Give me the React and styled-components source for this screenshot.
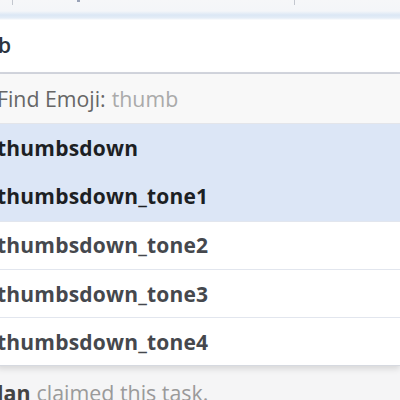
import React from "react";
import styled, { createGlobalStyle } from "styled-components";

const Global = createGlobalStyle`
  html, body { margin: 0; padding: 0; background: #f4f4f5; overflow: hidden; }
  body { font-family: "Open Sans", "Liberation Sans", sans-serif; }
`;

const Page = styled.div`
  width: 400px;
  height: 400px;
  overflow: hidden;
  display: flex;
  flex-direction: column;
  background: linear-gradient(#e9e9ea, #f5f5f6 30px);
`;

const Toolbar = styled.div`
  height: 20px;
  flex: none;
  display: flex;
  align-items: flex-start;
  background: linear-gradient(#f6f7f9 0px, #f4f6f9 11px, #dbe7f5 15px, #e4edf7 18px, #fdfdfe 20px);
`;

const Sep = styled.span`
  width: 1px;
  height: 5px;
  background: #c3c7cf;
  margin-left: ${(p) => p.$left}px;
`;

const Dot = styled.span`
  width: 3px;
  height: 2px;
  margin-left: 64px;
  background: #9aa3b8;
`;

const Input = styled.div`
  height: 54px;
  flex: none;
  display: flex;
  align-items: center;
  background: #ffffff;
  border-bottom: 2px solid #d3d6de;
  box-sizing: border-box;
  font-size: 21px;
  font-weight: 600;
  color: #2c3440;
  margin-left: -2px;
  padding-bottom: 3px;
`;

const Menu = styled.div`
  flex: none;
  background: #fff;
  margin-left: -3px;
  box-shadow: 0 3px 6px rgba(0, 0, 0, 0.12);
  border-bottom: 1px solid #d6d9e0;
`;

const Header = styled.div`
  height: 50px;
  display: flex;
  align-items: center;
  background: #f8f8f8;
  border-bottom: 1px solid #e3e5ea;
  font-size: 21.3px;
  color: #666666;
  box-sizing: border-box;
`;

const Query = styled.span`
  color: #aaaaaa;
  margin-left: 6px;
`;

const Row = styled.div`
  height: 48.3px;
  display: flex;
  align-items: center;
  box-sizing: border-box;
  background: ${(p) => (p.$active ? "#dce6f6" : "#ffffff")};
  border-top: ${(p) => (p.$first ? "none" : p.$active ? "none" : "1px solid #e2e6ee")};
  font-size: 21px;
  font-weight: 700;
  color: ${(p) => (p.$active ? "#1c1f24" : "#45484d")};
  letter-spacing: 0.2px;
`;

const Footer = styled.div`
  flex: 1;
  display: flex;
  align-items: flex-end;
  font-size: 21.4px;
  color: #9a9a9a;
  margin-left: -3px;
  line-height: 28px;
  margin-bottom: -7px;
`;

const Name = styled.b`
  color: #444;
  font-weight: 700;
  margin-right: 6px;
`;

const items = [
  { t: "thumbsdown", a: true },
  { t: "thumbsdown_tone1", a: true },
  { t: "thumbsdown_tone2" },
  { t: "thumbsdown_tone3" },
  { t: "thumbsdown_tone4" },
];

export default function App() {
  return (
    <Page>
      <Global />
      <Toolbar>
        <Sep $left={12} />
        <Dot />
        <Sep $left={214} />
      </Toolbar>
      <Input>b</Input>
      <Menu>
        <Header>
          Find Emoji:<Query>thumb</Query>
        </Header>
        {items.map((it, i) => (
          <Row key={it.t} $active={it.a} $first={i === 0}>
            {it.t}
          </Row>
        ))}
      </Menu>
      <Footer>
        <Name>lan</Name>claimed this task.
      </Footer>
    </Page>
  );
}
